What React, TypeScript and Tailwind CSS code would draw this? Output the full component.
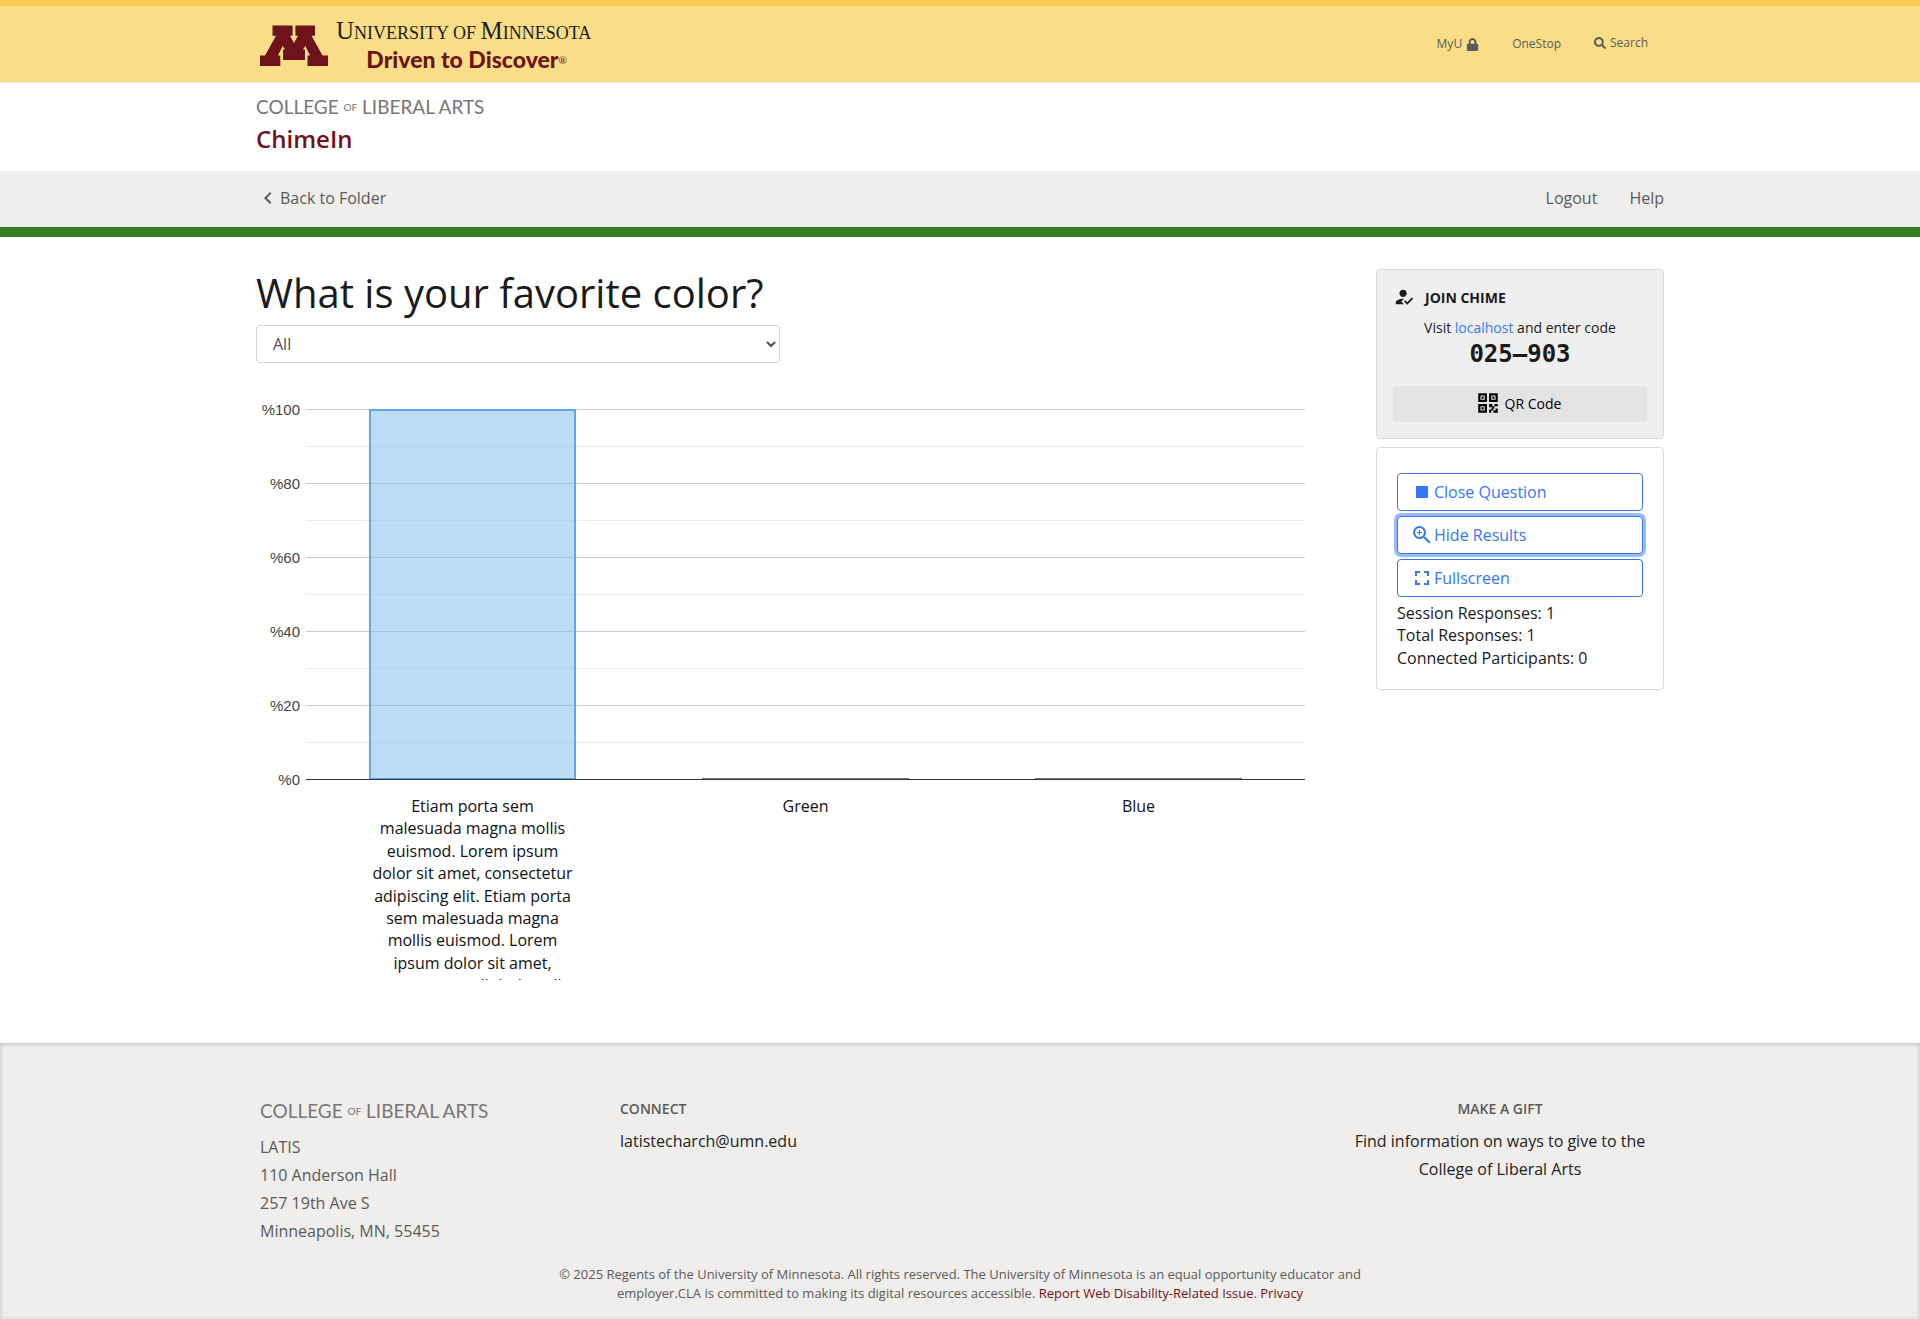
import { useState } from "react";
import { FaLock, FaSearch } from "react-icons/fa";
import { MdChevronLeft, MdFullscreen, MdHowToReg, MdStop, MdZoomIn } from "react-icons/md";
import { RiQrCodeLine } from "react-icons/ri";

const container = "mx-auto w-full max-w-[1408px]";

const bars = [
  {
    label:
      "Etiam porta sem malesuada magna mollis euismod. Lorem ipsum dolor sit amet, consectetur adipiscing elit. Etiam porta sem malesuada magna mollis euismod. Lorem ipsum dolor sit amet, consectetur adipiscing elit.",
    value: 100,
  },
  { label: "Green", value: 0 },
  { label: "Blue", value: 0 },
];

const ticks = ["%100", "%80", "%60", "%40", "%20"];

function BlockM() {
  return (
    <svg
      viewBox="0 0 68 41"
      className="h-[41px] w-[68px]"
      fill="#6e131b"
      role="img"
      aria-label="Block M"
    >
      <path d="M12.500 0.500H32.600V10.800H30L34 18L38 10.800H35.400V0.500H55V10.800H51.500L62.500 30.500H68V41H47.500V30.500H50L45.300 21L43 24.500H45V35H23V24.500H25L22.700 21L18 30.500H20.300V41H0V30.500H5L16 10.800H12.500Z" />
    </svg>
  );
}

function CollegeWordmark() {
  return (
    <span className="block font-[Lato] text-[19px] leading-[24px] whitespace-nowrap text-[#777677]">
      COLLEGE <span className="align-[3px] text-[10px] leading-none">OF</span> LIBERAL ARTS
    </span>
  );
}

function Header() {
  return (
    <header>
      <div className="border-t-6 border-b border-t-[#f6cd55] border-b-[#eeebe0] bg-[#fade87]">
        <div className={`${container} flex h-[76px] items-center justify-between pr-4 pl-1`}>
          <a href="#" className="flex items-center gap-2 pt-0.5">
            <BlockM />
            <span className="flex flex-col items-center">
              <span className="font-['Liberation_Serif'] text-[18px] leading-[26px] whitespace-nowrap text-[#1d1d1b]">
                <span className="text-[25px]">U</span>NIVERSITY OF{" "}
                <span className="text-[25px]">M</span>INNESOTA
              </span>
              <span className="pl-1.5 font-[Lato] text-[23px] leading-[26px] font-black whitespace-nowrap text-[#6e131b]">
                Driven to Discover
                <span className="align-[4px] text-[10px] leading-none font-normal">®</span>
              </span>
            </span>
          </a>
          <nav className="flex items-center gap-[33px] text-[12px] leading-4 text-[#5a5a5a]">
            <a href="#" className="flex items-center gap-1">
              MyU <FaLock size={13} />
            </a>
            <a href="#">OneStop</a>
            <a href="#" className="flex items-center gap-1 pb-0.5">
              <FaSearch size={12} /> Search
            </a>
          </nav>
        </div>
      </div>
      <div className={`${container} flex h-[88px] flex-col pt-3`}>
        <a href="#">
          <CollegeWordmark />
        </a>
        <a href="#" className="mt-1 text-[24px] leading-8 font-semibold text-[#6e131b]">
          ChimeIn
        </a>
      </div>
      <div className="border-b-10 border-[#347d21] bg-[#efeeec]">
        <nav
          className={`${container} flex h-[56px] items-center justify-between pb-0.5 text-[16px] text-[#5a5a5a]`}
        >
          <a href="#" className="flex items-center">
            <MdChevronLeft size={24} /> Back to Folder
          </a>
          <div className="flex gap-8">
            <a href="#">Logout</a>
            <a href="#">Help</a>
          </div>
        </nav>
      </div>
    </header>
  );
}

function ResultsChart() {
  return (
    <figure className="mt-[46px] mr-[71px]">
      <div className="flex">
        <div className="-mt-[9px] w-[50px] pr-[6px] text-right font-['Liberation_Sans'] text-[15px] leading-5 text-[#444444]">
          {ticks.map((t) => (
            <div key={t} className="h-[74px]">
              {t}
            </div>
          ))}
          <div>%0</div>
        </div>
        <div className="relative flex-1">
          {ticks.map((t) => (
            <div key={t} className="h-[74px] border-t border-[#cccccc]">
              <div className="h-[36px]" />
              <div className="border-t border-[#ebebeb]" />
            </div>
          ))}
          <div className="h-px bg-[#333333]" />
          <div className="absolute inset-x-0 top-0 grid h-[370px] grid-cols-3 items-end">
            {bars.map((b) =>
              b.value > 0 ? (
                <div
                  key={b.label}
                  className="mx-auto w-[62%] border-2 border-b border-[#5ea7e8] bg-[#7ab8ec]/50"
                  style={{ height: `${b.value}%` }}
                />
              ) : (
                <div key={b.label} className="mx-auto h-px w-[62%] bg-[#777777]" />
              ),
            )}
          </div>
        </div>
      </div>
      <div className="ml-[50px] grid grid-cols-3">
        {bars.map((b) => (
          <div
            key={b.label}
            className="mx-auto mt-[5px] h-[185px] w-[62%] overflow-hidden text-center text-[16px] leading-[1.4] text-[#111111]"
          >
            {b.label}
          </div>
        ))}
      </div>
    </figure>
  );
}

function JoinPanel() {
  return (
    <section className="rounded border border-[#dbdbdb] bg-[#efefef] p-4 text-[14px] text-[#1a1a1a]">
      <h2 className="flex items-center gap-2.5 font-bold">
        <MdHowToReg size={22} /> JOIN CHIME
      </h2>
      <p className="mt-2.5 text-center leading-5">
        Visit{" "}
        <a href="#" className="text-[#3478f6]">
          localhost
        </a>{" "}
        and enter code
      </p>
      <p className="text-center font-['DejaVu_Sans_Mono'] text-[24px] leading-8 font-bold">
        025–903
      </p>
      <button
        type="button"
        className="mt-4 flex h-9 w-full items-center justify-center gap-1 rounded bg-[#e3e3e3] pr-1 pb-0.5 text-black"
      >
        <RiQrCodeLine size={26} /> QR Code
      </button>
    </section>
  );
}

const actionButton =
  "flex h-[38px] w-full items-center rounded border border-[#3478f6] bg-white px-3 text-[16px] text-[#3478f6]";

function ControlPanel() {
  return (
    <section className="mt-2 rounded border border-[#dbdbdb] bg-white px-5 pt-[25px] pb-5 text-[16px] text-[#1a1a1a]">
      <div className="flex flex-col gap-[5px]">
        <button type="button" className={actionButton}>
          <MdStop size={24} /> Close Question
        </button>
        <button type="button" className={`${actionButton} ring-3 ring-[#3478f6]/50`}>
          <MdZoomIn size={24} /> Hide Results
        </button>
        <button type="button" className={actionButton}>
          <MdFullscreen size={24} /> Fullscreen
        </button>
      </div>
      <div className="mt-[5px] leading-[1.4]">
        <p>Session Responses: 1</p>
        <p>Total Responses: 1</p>
        <p>Connected Participants: 0</p>
      </div>
    </section>
  );
}

function Footer() {
  return (
    <footer className="flex-1 bg-[#efeeec] text-[16px] leading-7 text-[#5a5a5a] shadow-[inset_0_1px_5px_rgba(0,0,0,0.2)]">
      <div className={`${container} flex items-start pt-[54px] pl-1`}>
        <div className="w-[360px] pt-0.5">
          <CollegeWordmark />
          <address className="mt-2.5 not-italic">
            LATIS
            <br />
            110 Anderson Hall
            <br />
            257 19th Ave S
            <br />
            Minneapolis, MN, 55455
          </address>
        </div>
        <div className="flex-1">
          <h2 className="text-[14px] leading-6 font-semibold">CONNECT</h2>
          <a href="#" className="mt-1.5 block text-[#222222]">
            latistecharch@umn.edu
          </a>
        </div>
        <div className="w-[328px] text-center">
          <h2 className="text-[14px] leading-6 font-semibold">MAKE A GIFT</h2>
          <a href="#" className="mt-1.5 block text-[#222222]">
            Find information on ways to give to the College of Liberal Arts
          </a>
        </div>
      </div>
      <p className="mx-auto mt-5 max-w-[832px] pb-4 text-center text-[13px] leading-[19px]">
        © 2025 Regents of the University of Minnesota. All rights reserved. The University of
        Minnesota is an equal opportunity educator and employer.CLA is committed to making its
        digital resources accessible.{" "}
        <a href="#" className="text-[#6e131b]">
          Report Web Disability-Related Issue
        </a>
        .{" "}
        <a href="#" className="text-[#6e131b]">
          Privacy
        </a>
      </p>
    </footer>
  );
}

export default function App() {
  const [filter, setFilter] = useState("All");
  return (
    <div className="flex min-h-screen flex-col bg-white font-['Open_Sans',sans-serif]">
      <Header />
      <main className={`${container} flex items-start pt-8 pb-[63px]`}>
        <div className="min-w-0 flex-1">
          <h1 className="text-[40px] leading-12 text-[#1a1a1a]">What is your favorite color?</h1>
          <select
            aria-label="Session"
            value={filter}
            onChange={(e) => setFilter(e.target.value)}
            className="mt-2 block h-[38px] w-[524px] rounded border border-[#ced4da] bg-white px-3 text-[16px] text-[#495057]"
          >
            <option>All</option>
          </select>
          <ResultsChart />
        </div>
        <aside className="w-[288px]">
          <JoinPanel />
          <ControlPanel />
        </aside>
      </main>
      <Footer />
    </div>
  );
}
